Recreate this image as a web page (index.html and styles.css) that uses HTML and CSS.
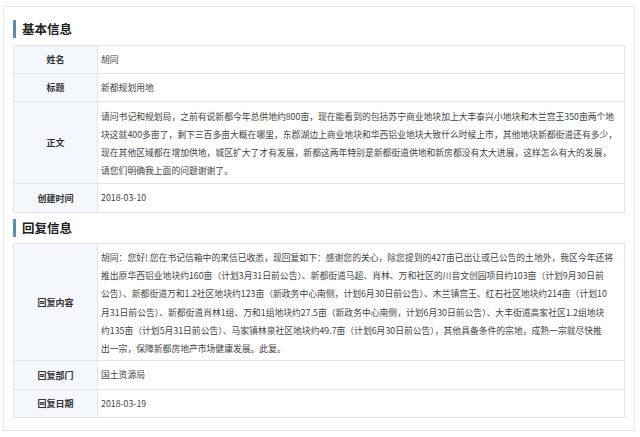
FILE: index.html
```html
<!DOCTYPE html>
<html lang="zh-CN">
<head>
<meta charset="utf-8">
<title>信息详情</title>
<link rel="stylesheet" href="styles.css">
</head>
<body>
<div class="panel">
  <h2 class="section-title">基本信息</h2>
  <div class="info-table">
    <div class="row">
      <div class="label">姓名</div>
      <div class="value">胡同</div>
    </div>
    <div class="row">
      <div class="label">标题</div>
      <div class="value">新都规划用地</div>
    </div>
    <div class="row">
      <div class="label">正文</div>
      <div class="value body-text">请问书记和规划局，之前有说新都今年总供地约800亩，现在能看到的包括苏宁商业地块加上大丰泰兴小地块和木兰宫王350亩两个地<br>块这就400多亩了，剩下三百多亩大概在哪里，东郡湖边上商业地块和华西铝业地块大致什么时候上市，其他地块新都街道还有多少，<br>现在其他区域都在增加供地，城区扩大了才有发展，新都这两年特别是新都街道供地和新房都没有太大进展，这样怎么有大的发展，<br>请您们明确我上面的问题谢谢了。</div>
    </div>
    <div class="row">
      <div class="label">创建时间</div>
      <div class="value tall">2018-03-10</div>
    </div>
  </div>

  <h2 class="section-title second">回复信息</h2>
  <div class="info-table">
    <div class="row">
      <div class="label">回复内容</div>
      <div class="value reply-text">胡同：您好! 您在书记信箱中的来信已收悉，现回复如下：感谢您的关心，除您提到的427亩已出让或已公告的土地外，我区今年还将<br>推出原华西铝业地块约160亩（计划3月31日前公告）、新都街道马超、肖林、万和社区的川音文创园项目约103亩（计划9月30日前<br>公告）、新都街道万和1.2社区地块约123亩（新政务中心南侧，计划6月30日前公告）、木兰镇宫王、红石社区地块约214亩（计划10<br>月31日前公告）、新都街道肖林1组、万和1组地块约27.5亩（新政务中心南侧，计划6月30日前公告）、大丰街道高家社区1.2组地块<br>约135亩（计划5月31日前公告）、马家镇林泉社区地块约49.7亩（计划6月30日前公告），其他具备条件的宗地，成熟一宗就尽快推<br>出一宗，保障新都房地产市场健康发展。此复。</div>
    </div>
    <div class="row">
      <div class="label">回复部门</div>
      <div class="value tall">国土资源局</div>
    </div>
    <div class="row">
      <div class="label">回复日期</div>
      <div class="value">2018-03-19</div>
    </div>
  </div>
</div>
</body>
</html>
```

FILE: styles.css
```css
html, body {
  margin: 0;
  padding: 0;
  background: #ffffff;
}

body {
  font-family: "Noto Sans CJK SC", "Noto Sans", sans-serif;
  color: #333333;
}

.panel {
  box-sizing: border-box;
  width: 632px;
  margin: 6px 0 0 3px;
  padding: 13px 9px 12px 9px;
  border: 1px solid #e8e8e8;
  background: #ffffff;
}

.section-title {
  margin: 0;
  height: 18px;
  line-height: 18px;
  border-left: 3px solid #5b8fb2;
  padding-left: 6px;
  font-size: 12.5px;
  font-weight: bold;
  color: #222222;
}

.section-title.second {
  margin-top: 6px;
}

.info-table {
  margin-top: 7px;
  border: 1px solid #e4e4e4;
  border-bottom: none;
}

.section-title.second + .info-table {
  margin-top: 6px;
}

.row {
  display: flex;
  border-bottom: 1px solid #e4e4e4;
}

.label {
  flex: 0 0 83px;
  display: flex;
  align-items: center;
  justify-content: center;
  background: #f4f7fb;
  border-right: 1px solid #e6e6e6;
  font-size: 9px;
  font-weight: bold;
  color: #333333;
}

.value {
  flex: 1;
  padding: 5px 3px 4px 3px;
  font-size: 8.8px;
  line-height: 18px;
  white-space: nowrap;
  color: #444444;
}

.value.tall {
  padding-bottom: 5px;
}

.value.body-text {
  padding-top: 6px;
  padding-bottom: 3px;
}

.value.reply-text {
  padding-top: 5px;
  padding-bottom: 2px;
  line-height: 18.2px;
}
```
